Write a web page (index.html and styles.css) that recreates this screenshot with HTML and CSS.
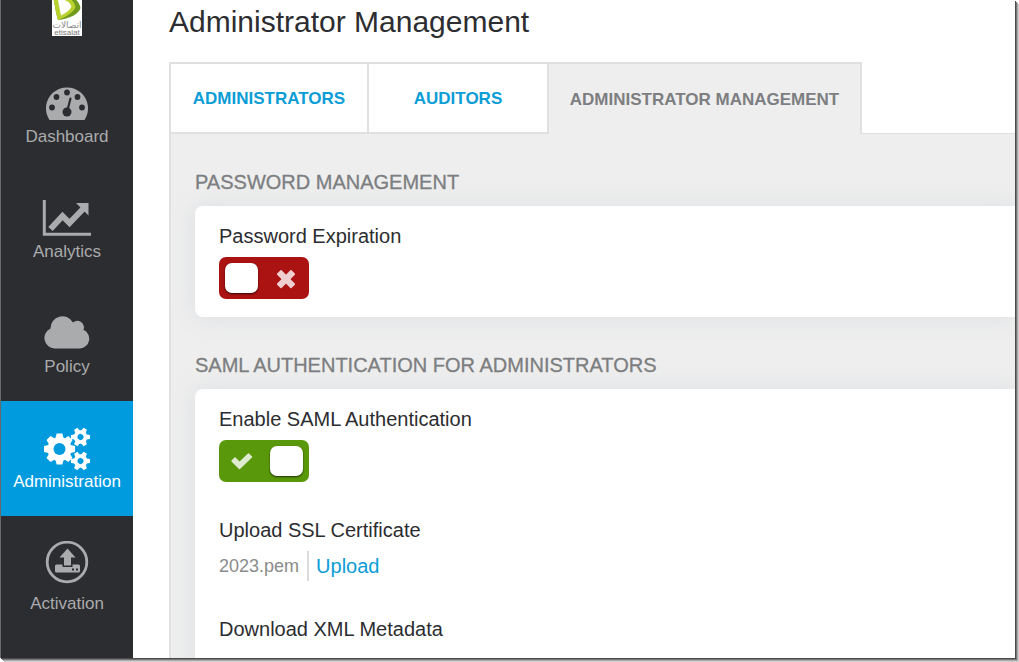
FILE: index.html
```html
<!DOCTYPE html>
<html lang="en">
<head>
<meta charset="utf-8">
<title>Administrator Management</title>
<link rel="stylesheet" href="styles.css">
</head>
<body>
<div class="window">
  <nav class="sidebar" aria-label="Main">
    <a class="logo" href="#" aria-label="etisalat">
      <svg width="30" height="36" viewBox="0 0 30 36">
        <rect width="30" height="36" fill="#fff"/>
        <path d="M1 -4 H20 C25 0 28 4 28.500 8 C27 14 17 19 6 20 C4 14 3 6 1 -4Z" fill="#6f9a1d"/>
        <path d="M1 -4 H14 C20 -1 23 3 23.500 7 C22 12 14 17 6 20 C4 14 3 6 1 -4Z" fill="#b9d12c"/>
        <path d="M6 0 C12 -2 18 2 19.500 6.500 C18 10 14 13 9 15.500 C8 11 7 5 6 0Z" fill="#fff"/>
        <text x="15" y="28" text-anchor="middle" class="logo-arabic">اتصالات</text>
        <text x="15" y="35" text-anchor="middle" class="logo-latin">etisalat</text>
      </svg>
    </a>
    <a class="nav-item" href="#">
      <span class="nav-icon">
        <svg width="44" height="34" viewBox="0 0 44 34">
          <path d="M4.500 34 A21 21 0 1 1 39.500 34Z" fill="currentColor"/>
          <g fill="#2c2d30">
            <circle cx="7" cy="21.500" r="2.900"/><circle cx="11.500" cy="11" r="2.900"/><circle cx="22" cy="6.500" r="2.900"/><circle cx="32.500" cy="11" r="2.900"/><circle cx="37" cy="21.500" r="2.900"/><circle cx="22" cy="26" r="4.500"/>
          </g>
          <path d="M22.500 24 L25.500 12.500" stroke="#2c2d30" stroke-width="2.200" stroke-linecap="round"/>
        </svg>
      </span>
      <span class="nav-label">Dashboard</span>
    </a>
    <a class="nav-item" href="#">
      <span class="nav-icon">
        <svg width="50" height="36" viewBox="0 0 50 36">
          <path d="M2.300 0 V34.300 H49" fill="none" stroke="currentColor" stroke-width="3"/>
          <path d="M8.500 29 L20.500 16 L27.500 23 L42 8" fill="none" stroke="currentColor" stroke-width="6"/>
          <path d="M34 3 H46.500 V15.500Z" fill="currentColor"/>
        </svg>
      </span>
      <span class="nav-label">Analytics</span>
    </a>
    <a class="nav-item" href="#">
      <span class="nav-icon">
        <svg width="46" height="36" viewBox="0 0 46 36">
          <path d="M10.500 33.500 A10.500 10.500 0 0 1 6.500 13.500 A12 12 0 0 1 29 7.500 A6.600 6.600 0 0 1 39.500 14.800 A9.800 9.800 0 0 1 36 33.500Z" fill="currentColor"/>
        </svg>
      </span>
      <span class="nav-label">Policy</span>
    </a>
    <a class="nav-item nav-item-active" href="#" aria-current="page">
      <span class="nav-icon">
        <svg width="46" height="44" viewBox="0 0 46 44">
          <defs>
            <g id="gear">
              <circle r="12"/>
              <g id="teeth"><path d="M-4 -11 L-2.900 -15.500 H2.900 L4 -11 V11 L2.900 15.500 H-2.900 L-4 11Z"/><path d="M-11 -4 L-15.500 -2.900 V2.900 L-11 4 H11 L15.500 2.900 V-2.900 L11 -4Z"/></g>
              <use href="#teeth" transform="rotate(45)"/>
              <circle r="6" fill="#009bdf"/>
            </g>
            <g id="small-gear">
              <circle r="6.800"/>
              <g id="cog"><path d="M-2.500 -6 L-1.900 -9.500 H1.900 L2.500 -6 V6 L1.900 9.500 H-1.900 L-2.500 6Z"/></g>
              <use href="#cog" transform="rotate(60)"/><use href="#cog" transform="rotate(120)"/>
              <circle r="3" fill="#009bdf"/>
            </g>
          </defs>
          <g fill="currentColor">
            <use href="#gear" x="15.500" y="23"/>
            <use href="#small-gear" transform="translate(36.500 11) rotate(30)"/>
            <use href="#small-gear" transform="translate(36.500 35) rotate(30)"/>
          </g>
        </svg>
      </span>
      <span class="nav-label">Administration</span>
    </a>
    <a class="nav-item nav-item-spaced" href="#">
      <span class="nav-icon">
        <svg width="44" height="44" viewBox="0 0 44 44">
          <circle cx="22" cy="21" r="19.800" fill="none" stroke="currentColor" stroke-width="2.800"/>
          <path d="M22.500 7.500 L30.500 16.500 H26 V24.500 H19 V16.500 H14.500Z" fill="currentColor"/>
          <path d="M11.500 23.500 H17.500 V26 H27.500 V23.500 H33.500 A1.500 1.500 0 0 1 35 25 V30 A1.500 1.500 0 0 1 33.500 31.500 H11.500 A1.500 1.500 0 0 1 10 30 V25 A1.500 1.500 0 0 1 11.500 23.500Z" fill="currentColor"/>
          <path d="M27 27.500 h2 v2 h-2z M31 27.500 h2 v2 h-2z" fill="#2c2d30"/>
        </svg>
      </span>
      <span class="nav-label">Activation</span>
    </a>
  </nav>
  <main class="content">
    <h1 class="title">Administrator Management</h1>
    <div class="tabs" role="tablist">
      <button class="tab" type="button" role="tab" aria-selected="false">ADMINISTRATORS</button>
      <button class="tab" type="button" role="tab" aria-selected="false">AUDITORS</button>
      <button class="tab tab-active" type="button" role="tab" aria-selected="true">ADMINISTRATOR MANAGEMENT</button>
      <div class="tab-rest"></div>
    </div>
    <div class="panel" role="tabpanel">
      <section>
        <h2 class="section-title">PASSWORD MANAGEMENT</h2>
        <div class="card">
          <div class="field">
            <label class="field-label" for="expiration">Password Expiration</label>
            <span class="switch">
              <input class="switch-input" type="checkbox" id="expiration">
              <svg class="switch-icon switch-icon-off" width="22" height="22" viewBox="0 0 20 20"><path d="M2.500 5.500 L5.500 2.500 L10 7 L14.500 2.500 L17.500 5.500 L13 10 L17.500 14.500 L14.500 17.500 L10 13 L5.500 17.500 L2.500 14.500 L7 10Z" transform="translate(0 1)" fill="#f0cfd1" stroke="#f0cfd1" stroke-width="1.500" stroke-linejoin="round"/></svg>
            </span>
          </div>
        </div>
      </section>
      <section>
        <h2 class="section-title">SAML AUTHENTICATION FOR ADMINISTRATORS</h2>
        <div class="card">
          <div class="field">
            <label class="field-label" for="saml">Enable SAML Authentication</label>
            <span class="switch">
              <input class="switch-input" type="checkbox" id="saml" checked>
              <svg class="switch-icon" width="22" height="18" viewBox="0 0 22 18"><path d="M1 9 L4 6 L8.500 10.500 L17.500 2 L20.500 5 L8.500 16.500Z" fill="#deebcf" stroke="#deebcf" stroke-width="1.500" stroke-linejoin="round"/></svg>
            </span>
          </div>
          <div class="field">
            <div class="field-label">Upload SSL Certificate</div>
            <div class="file-row">
              <span class="file-name">2023.pem</span>
              <a class="link link-divided" href="#">Upload</a>
            </div>
          </div>
          <div class="field">
            <div class="field-label">Download XML Metadata</div>
            <div class="action-row"><a class="link" href="#">Download</a></div>
          </div>
        </div>
      </section>
    </div>
  </main>
</div>
</body>
</html>
```
FILE: styles.css
```css
* {
  box-sizing: border-box;
}

body {
  margin: 0;
  height: 100vh;
  padding: 0 4px 4px 0;
  overflow: hidden;
  background: #fff;
  color: #2c2d30;
  font-family: "Liberation Sans", Arial, sans-serif;
}

a {
  text-decoration: none;
}

.window {
  display: flex;
  height: 100%;
  overflow: hidden;
  background: #fff;
  box-shadow: 1px 1px 0 #4b4b4b, 2px 2px 0 #777, 3px 3px 0 #aaa, 4px 4px 0 #d0d0d0;
}

.sidebar {
  flex: none;
  width: 133px;
  border-left: 1px solid #686a69;
  background: #2c2d30;
}

.logo {
  display: flex;
  justify-content: center;
  height: 56px;
}

.logo-arabic {
  fill: #8a8a8a;
  font: 9px "DejaVu Sans", sans-serif;
}

.logo-latin {
  fill: #777;
  font: 8px "Liberation Sans", Arial, sans-serif;
}

.nav-item {
  display: flex;
  flex-direction: column;
  align-items: center;
  gap: 2px;
  height: 115px;
  padding-top: 25px;
  color: #aaabad;
}

.nav-item-active {
  background: #009bdf;
  color: #fff;
}

.nav-item-spaced {
  gap: 9px;
}

.nav-icon {
  display: flex;
  align-items: center;
  height: 44px;
}

.nav-label {
  font-size: 17px;
  line-height: 20px;
}

.content {
  flex: 1;
  display: flex;
  flex-direction: column;
  min-width: 0;
  padding-left: 36px;
}

.title {
  margin: 0 0 22px;
  padding-top: 4px;
  font-size: 30px;
  font-weight: 400;
  line-height: 36px;
}

.tabs {
  display: flex;
  flex: none;
  height: 72px;
}

.tab {
  min-width: 180px;
  margin: 0;
  padding: 2px 20px 0;
  border: 2px solid #dfe0e1;
  border-right: 0;
  background: #fff;
  color: #0b9dd6;
  font: bold 17px/20px "Liberation Sans", Arial, sans-serif;
}

.tab:first-child {
  min-width: 198px;
}

.tab-active {
  min-width: 315px;
  border-right: 2px solid #dfe0e1;
  border-bottom: 0;
  background: #eee;
  color: #7c7e81;
}

.tab-rest {
  flex: 1;
  border-bottom: 1px solid #dfe0e1;
}

.panel {
  flex: 1 0 auto;
  padding: 36px 0 0 24px;
  border-left: 2px solid #dfe0e1;
  background: #eee;
}

.section-title {
  margin: 0 0 12px;
  color: #7c7e81;
  font-size: 20px;
  font-weight: 400;
  line-height: 24px;
  -webkit-text-stroke: 0.3px #7c7e81;
}

.card {
  display: flex;
  flex-direction: column;
  gap: 36px;
  margin-bottom: 36px;
  padding: 18px 24px;
  border-radius: 8px 0 0 8px;
  background: #fff;
  box-shadow: 0 0 24px #dcdfe3;
}

.field {
  display: flex;
  flex-direction: column;
  align-items: flex-start;
  gap: 9px;
}

.field-label {
  font-size: 20px;
  line-height: 24px;
}

.switch {
  display: grid;
  align-items: center;
}

.switch-input {
  grid-area: 1 / 1;
  appearance: none;
  display: flex;
  align-items: center;
  width: 90px;
  height: 42px;
  margin: 0;
  padding: 0 6px;
  border-radius: 7px;
  background: #ab1212;
}

.switch-input:checked {
  justify-content: flex-end;
  background: #5a980b;
}

.switch-input::before {
  content: "";
  width: 33px;
  height: 30px;
  border-radius: 7px;
  background: #fff;
  box-shadow: 0 1px 2px rgba(0, 0, 0, 0.7);
}

.switch-icon {
  grid-area: 1 / 1;
  margin-left: 12px;
  pointer-events: none;
}

.switch-icon-off {
  justify-self: end;
  margin-right: 12px;
}

.file-row {
  display: flex;
  align-items: center;
  height: 30px;
}

.action-row {
  padding-top: 1px;
}

.file-name {
  padding-right: 8px;
  color: #8b8b8b;
  font-size: 18px;
}

.link {
  color: #0b9dd6;
  font-size: 20px;
  line-height: 30px;
}

.link-divided {
  padding-left: 7px;
  border-left: 2px solid #d9dadb;
}
```
